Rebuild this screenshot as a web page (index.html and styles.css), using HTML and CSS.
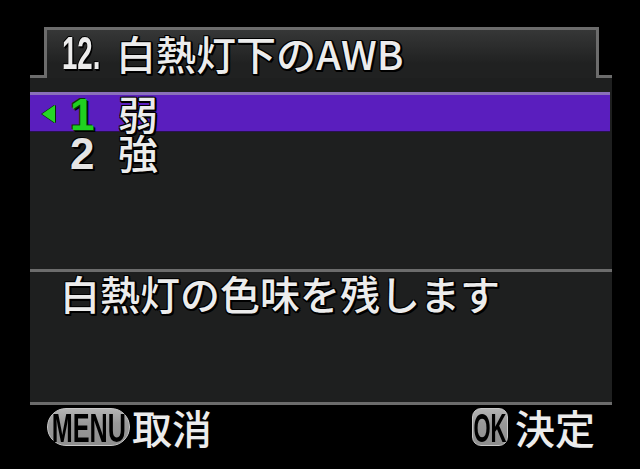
FILE: index.html
```html
<!DOCTYPE html>
<html lang="ja">
<head>
<meta charset="utf-8">
<link rel="stylesheet" href="styles.css">
</head>
<body>
<div class="screen">
  <div class="tab">
    <span class="num">12.</span><span class="title">白熱灯下のAWB</span>
  </div>
  <div class="panel">
    <div class="list">
      <div class="row sel">
        <span class="arrow"><span class="tri"></span></span>
        <span class="digit green">1</span>
        <span class="jp">弱</span>
      </div>
      <div class="row">
        <span class="arrow"></span>
        <span class="digit">2</span>
        <span class="jp">強</span>
      </div>
    </div>
    <div class="desc">白熱灯の色味を残します</div>
  </div>
  <div class="footer">
    <div class="btn">
      <span class="badge menu"><span class="badge-text">MENU</span></span>
      <span class="label">取消</span>
    </div>
    <div class="btn ok-btn">
      <span class="badge ok"><span class="badge-text ok-text">OK</span></span>
      <span class="label">決定</span>
    </div>
  </div>
</div>
</body>
</html>
```
FILE: styles.css
```css
html, body {
  margin: 0;
  background: #000;
}
body {
  width: 640px;
  height: 469px;
  overflow: hidden;
  font-family: "Noto Sans CJK JP", sans-serif;
  color: #ececec;
}
.screen {
  padding-top: 27px;
}
.jp, .title, .desc, .label {
  font-size: 40px;
  line-height: 40px;
  font-weight: 500;
  text-shadow: 1px 1px 0 #000, -1px -1px 0 #000, 1px -1px 0 #000, -1px 1px 0 #000, 2px 2px 0 #000, 0 2px 0 #000, 2px 0 0 #000;
}
.tab {
  position: relative;
  height: 51px;
  margin: 0 41px -3px 44px;
  border: 3px solid #6c6c6c;
  border-bottom: 0;
  background: linear-gradient(#363737, #202121 70%);
  padding-left: 15px;
  padding-bottom: 2px;
  display: flex;
  align-items: center;
  box-sizing: border-box;
}
.num {
  display: inline-block;
  width: 54px;
  font-family: "Liberation Sans", sans-serif;
  font-size: 46px;
  line-height: 40px;
  font-weight: bold;
  transform: scaleX(0.6);
  transform-origin: left center;
  white-space: nowrap;
  text-shadow: 1px 1px 0 #000, -1px -1px 0 #000, 2px 2px 0 #000, 2px 0 0 #000;
}
.panel {
  margin: 0 28px 0 30px;
  background: #1e1f1f;
  border-top: 3px solid #6c6c6c;
  border-bottom: 3px solid #6c6c6c;
  height: 324px;
  display: flex;
  flex-direction: column;
}
.list {
  height: 191px;
  padding-top: 14px;
  box-sizing: border-box;
}
.row {
  display: flex;
  align-items: center;
  height: 40px;
  box-sizing: border-box;
}
.row .jp {
  line-height: 36px;
}
.row.sel {
  background: #5a1ebe;
  border-top: 3px solid #8a70ba;
  border-bottom: 1px solid #2a1050;
  margin-right: 2px;
}
.arrow {
  width: 40px;
  height: 36px;
  padding-left: 12px;
  box-sizing: border-box;
  display: flex;
  align-items: center;
  flex-shrink: 0;
}
.tri {
  display: block;
  flex: 0 0 auto;
  width: 0;
  height: 0;
  margin-top: 2px;
  border-style: solid;
  border-width: 9px 13px 9px 0;
  border-color: transparent #26d626 transparent transparent;
  filter: drop-shadow(1px 0 0 #082a08) drop-shadow(-1px 0 0 #082a08);
}
.digit {
  width: 48px;
  flex-shrink: 0;
  font-family: "Liberation Sans", sans-serif;
  font-weight: bold;
  font-size: 44px;
  line-height: 34px;
  padding-top: 3px;
  color: #e4e4e4;
  text-shadow: 1px 1px 0 #000, -1px -1px 0 #000, 2px 2px 0 #000;
}
.digit.green {
  color: #20d020;
  text-shadow: 1px 1px 0 #063806, -1px -1px 0 #063806, 2px 2px 0 #000;
}
.desc {
  border-top: 3px solid #6c6c6c;
  padding: 1px 0 0 30px;
}
.footer {
  display: flex;
  justify-content: space-between;
  align-items: center;
  padding: 2px 45px 0 47px;
}
.btn {
  display: flex;
  align-items: center;
  gap: 2px;
}
.ok-btn {
  gap: 7px;
}
.badge {
  display: flex;
  justify-content: center;
  align-items: center;
  height: 38px;
  box-sizing: border-box;
  background: linear-gradient(#b4b4b4, #999 40%, #8e8e8e);
  border: 1px solid #c8c8c8;
  overflow: visible;
}
.menu {
  width: 83px;
  border-radius: 19px;
}
.ok {
  width: 36px;
  border-radius: 9px;
}
.badge-text {
  display: inline-block;
  font-family: "Liberation Sans", sans-serif;
  font-weight: bold;
  font-size: 40px;
  line-height: 36px;
  color: #000;
  transform: scaleX(0.63);
  transform-origin: center;
  white-space: nowrap;
  padding-top: 2px;
}
.ok-text {
  transform: scaleX(0.55);
}
```
